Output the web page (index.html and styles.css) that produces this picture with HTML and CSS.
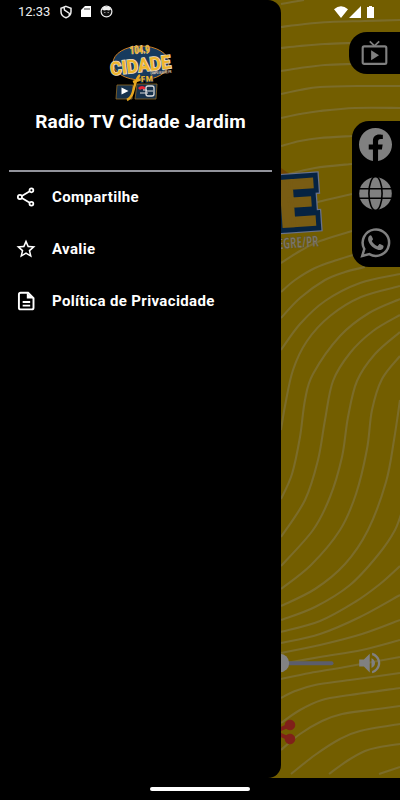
FILE: index.html
```html
<!DOCTYPE html>
<html lang="pt-BR">
<head>
<meta charset="utf-8">
<title>Radio TV Cidade Jardim</title>
<link rel="stylesheet" href="styles.css">
</head>
<body>
<div class="phone">
  <main class="player">
    <svg class="backdrop" viewBox="0 0 400 778" aria-hidden="true">
      <g id="waves"></g>
      <path d="M281 168l13 9-13 3z" fill="#714500"/>
      <g class="big-letter" transform="translate(284 227) rotate(-4)">
        <text class="rim" x="-4" y="0">E</text>
        <text class="navy" x="-4" y="0">E</text>
        <text class="gold" x="-4" y="0">E</text>
      </g>
      <text class="city" transform="translate(266 250) rotate(-4)" textLength="53" lengthAdjust="spacingAndGlyphs">ALEGRE/PR</text>
      <rect x="270" y="661.3" width="63.5" height="4" rx="2" fill="#5b5d6c"/>
      <circle cx="280" cy="663" r="9.2" fill="#828282"/>
      <g fill="#802019" stroke="#802019"><path d="M274 732L290 725M274 732L290 739" stroke-width="4"/><circle cx="290" cy="725" r="4.8"/><circle cx="290" cy="739" r="4.8"/></g>
      <g transform="translate(355.700 649) scale(1.17)"><path fill="#808080" d="M3 9v6h4l5 5V4L7 9H3zm10.5-1.2v8.4A4.7 4.7 0 0 0 16.500 12a4.700 4.700 0 0 0-3-4.200zM14 3.230v2.060c2.890.860 5 3.540 5 6.710s-2.110 5.850-5 6.710v2.060c4.010-.910 7-4.490 7-8.770s-2.990-7.860-7-8.770z"/></g>
    </svg>
    <div class="tv-tab">
      <svg width="27" height="27" viewBox="0 0 24 24"><g fill="none" stroke="#808080" stroke-width="1.900"><rect x="1.500" y="5.700" width="21" height="15.500" rx="1.300"/><path stroke-width="1.500" d="M7.800 1.200L12 5.200l4.200-4"/></g><path fill="#808080" d="M9 9v9l7-4.500z"/></svg>
    </div>
    <nav class="social">
      <svg width="33" height="33" viewBox="0 0 24 24"><path fill="#808080" d="M24 12.070C24 5.410 18.630 0 12 0S0 5.410 0 12.070C0 18.100 4.390 23.100 10.130 24v-8.440H7.080v-3.490h3.050V9.410c0-3.020 1.790-4.690 4.530-4.690 1.310 0 2.680.240 2.680.240v2.970h-1.510c-1.490 0-1.960.930-1.960 1.890v2.250h3.330l-.530 3.490h-2.800V24C19.610 23.100 24 18.100 24 12.070z"/></svg>
      <svg width="33" height="33" viewBox="0 0 33 33"><circle cx="16.500" cy="16.500" r="16.300" fill="#808080"/><g fill="none" stroke="#000" stroke-width="1.600"><ellipse cx="16.500" cy="16.500" rx="6.600" ry="17"/><path d="M0 11.800h33M0 21.200h33"/></g></svg>
      <svg width="33" height="33" viewBox="0 0 33 33"><path d="M3.200 30L5.300 23A13.200 13.200 0 1 1 10.300 28.100Z" fill="none" stroke="#808080" stroke-width="2.500"/><path fill="#808080" d="M10.400 9.800c.8-.8 1.700-.8 2.200.1l1.300 2.900c.3.700-.2 1.200-1.100 2.200 1.300 2.500 3 4.100 5.700 5.200l1.500-1.800c.4-.5.900-.4 1.500-.1l2.600 1.300c.7.400.5 1.500.1 2.400-.8 1.700-2.900 2.300-4.700 1.900-5.300-1.300-8.600-4.500-10.100-8.800-.7-2.100-.2-4.100 1-5.300z"/></svg>
    </nav>
  </main>

  <aside class="drawer">
    <header class="brand">
      <svg class="logo" width="76" height="62" viewBox="-4 0 76 62" role="img" aria-label="Cidade FM 104.9">
        <ellipse cx="34" cy="22" rx="28" ry="17" fill="#173b5e" stroke="#cf7d20" stroke-width="1"/>
        <text class="mini freq" x="23" y="12.500" transform="rotate(-3 33 12)" textLength="20" lengthAdjust="spacingAndGlyphs">104.9</text>
        <text class="mini name" x="4" y="34.500" transform="rotate(-7 4 34)" textLength="61" lengthAdjust="spacingAndGlyphs">CIDADE</text>
        <path d="M10 44h16l-1 14H9zM30 43h20l-1 15H28z" fill="#17324c" stroke="#936b25" stroke-width=".8"/>
        <path d="M14.500 46.500v7l7-3.500z" fill="#fff"/>
        <path d="M20 59c9-4 5-18 13-25M26 41l9-3" fill="none" stroke="#e7a720" stroke-width="2.500"/>
        <text class="mini fm" x="34" y="41" transform="rotate(-4 34 41)" textLength="12">FM</text>
        <text class="town" x="43.500" y="33.500" transform="rotate(-4 43 33)" textLength="21" lengthAdjust="spacingAndGlyphs">CAMPO ALEGRE/PR</text>
        <path d="M32 48q3-3 6 0" fill="none" stroke="#e42535" stroke-width="3"/>
        <rect x="39" y="45" width="8" height="10" rx="2" fill="#17324c" stroke="#ddd" stroke-width="1.300"/>
        <path d="M33 52h8M39 50h7M36 49h4" stroke="#ddd" stroke-width="1.200"/>
      </svg>
      <h1>Radio TV Cidade Jardim</h1>
    </header>
    <ul class="menu">
      <li><svg viewBox="0 0 24 24"><g fill="none" stroke="#fff" stroke-width="2.100"><circle cx="18.500" cy="4" r="2.300"/><circle cx="4.700" cy="12" r="2.500"/><circle cx="18.500" cy="20" r="2.300"/><path d="M7 10.700L16.500 5.200M7 13.300l9.500 5.500"/></g></svg><span>Compartilhe</span></li>
      <li><svg viewBox="1.500 1.500 21 21"><path fill="#fff" d="M22 9.240l-7.190-.620L12 2 9.190 8.630 2 9.240l5.460 4.730L5.820 21 12 17.270 18.180 21l-1.630-7.030L22 9.240zM12 15.400l-3.760 2.270 1-4.280-3.320-2.880 4.380-.380L12 6.100l1.710 4.040 4.380.380-3.320 2.880 1 4.280L12 15.400z"/></svg><span>Avalie</span></li>
      <li><svg viewBox="0 0 24 24"><path d="M5.500 2.100h9L21 8.500V20q0 2-2 2H5.500q-2 0-2-2V4.100q0-2 2-2zM8 13.200h9M8 17.500h9" fill="none" stroke="#fff" stroke-width="2.300"/><path d="M13 2l8 7h-8z" fill="#fff"/></svg><span>Política de Privacidade</span></li>
    </ul>
  </aside>

  <div class="statusbar">
    <span class="clock">12:33</span>
    <svg class="notices" width="54" height="14" viewBox="0 0 54 14"><path d="M6 1.400l5 1.800v3.500c0 3-2 5-5 6-3-1-5-3-5-6V3.200zM4 2l.5 3 5 3.500-.5 2.500" fill="none" stroke="#eee" stroke-width="1.500"/><path d="M25 1h6v11H21V5z" fill="#fff"/><path d="M25 3v2m2-2v2m2-2v2" stroke="#222" stroke-width=".9"/><circle cx="46.500" cy="6.500" r="5.400" fill="#111" stroke="#eee" stroke-width="1.200"/><path d="M42 4.500l2 1q2.500-1 5 0l2-1-1-2.500h-7z" fill="#eee"/><path d="M44 7.500h1.500m2 0h1.500" stroke="#888"/></svg>
    <svg class="signals" width="42" height="14" viewBox="0 0 42 14"><path d="M0 4.300Q7-2 14 4.300L7 13zM27 1v12H15z" fill="#fff"/><path d="M35 1h3v1h2v11h-7V2h2z" fill="#fff"/></svg>
  </div>
  <div class="navbar"><i></i></div>
</div>
<script src="waves.js"></script>
</body>
</html>
```
FILE: styles.css
```css
* { box-sizing: border-box; }
body { margin: 0; background: #000; font-family: Roboto, sans-serif; }
.phone { position: relative; width: 400px; height: 800px; overflow: hidden; background: #000; }
.player { height: 778px; background: #735e00; }
.backdrop { display: block; width: 400px; height: 778px; }
#waves path { fill: none; stroke: #7b6c2a; stroke-width: 2.1; }
.big-letter { font: 900 65px Roboto, sans-serif; stroke-linejoin: miter; }
.rim { fill: #69728a; stroke: #69728a; stroke-width: 14; }
.navy { fill: #052342; stroke: #052342; stroke-width: 11.500; }
.gold { fill: #795c13; stroke: #795c13; stroke-width: 2; }
.city { font: 700 15px "Open Sans", sans-serif; fill: #7e7868; stroke: #4c452e; stroke-width: .3; }
.tv-tab { position: absolute; top: 32px; right: 0; width: 51px; height: 42px; padding-left: 12px; display: flex; align-items: center; background: #000; border-radius: 18px 0 0 18px; }
.social { position: absolute; top: 121px; right: 0; width: 48px; height: 146px; padding: 7px 0 0 7px; display: flex; flex-direction: column; gap: 16px; background: #000; border-radius: 17px 0 0 17px; }
.drawer { position: absolute; top: 0; left: 0; width: 281px; height: 778px; background: #000; border-radius: 0 13px 13px 0; color: #fff; }
.brand { height: 172px; margin: 0 9px; padding-top: 41px; display: flex; flex-direction: column; align-items: center; border-bottom: 2px solid #92939b; }
.logo { display: block; }
h1 { margin: 7px 0 0; font-size: 19px; line-height: 24px; font-weight: 700; letter-spacing: .22px; white-space: nowrap; }
.mini { font-family: Roboto, sans-serif; font-weight: 900; fill: #efb52c; stroke: #193754; stroke-width: 1.800; paint-order: stroke; }
.freq { font-size: 11px; stroke: #d4c8ac; stroke-width: .8; }
.name { font-size: 18.500px; font-weight: 700; stroke: #e5dac1; stroke-width: 1.600; }
.fm { font-size: 8px; }
.town { font: 700 4px Roboto, sans-serif; fill: #f3dfbf; }
.menu { list-style: none; margin: -1px 0 0; padding: 0 16px; }
.menu li { height: 52px; display: flex; align-items: center; gap: 16px; font-size: 15px; font-weight: 700; letter-spacing: .36px; }
.menu svg { width: 20px; height: 20px; }
.statusbar { position: absolute; top: 0; left: 0; right: 0; height: 23px; padding: 0 24px 0 18px; display: flex; align-items: center; color: #eee; }
.clock { width: 42px; font-size: 13px; }
.signals { margin-left: auto; }
.navbar { height: 22px; display: flex; align-items: center; justify-content: center; }
.navbar i { width: 100px; height: 4px; border-radius: 2px; background: #fff; }
```
FILE: waves.js
```js
// Contour lines of the backdrop, each a list of points joined by a smooth curve.
const lines = [
  [281,4, 292,2, 304,0],
  [281,27, 305,24, 330,22, 365,21, 400,20],
  [281,48, 300,46, 325,44, 352,43],
  [281,71, 300,68, 325,65, 352,64],
  [281,94, 300,90, 320,87, 360,86, 400,86],
  [281,118, 300,114, 320,111, 355,108, 400,108],
  [281,146, 300,141, 320,138, 352,136],
  [281,176, 315,168, 352,164],
  [281,212, 322,201, 352,194],
  [281,263, 300,251, 320,241, 352,231],
  [281,292, 295,280, 315,268, 337,260, 360,253],
  [281,318, 300,298, 325,280, 345,272, 365,267],
  [281,350, 300,324, 325,301, 360,283, 400,274],
  [281,430, 285,406, 293,370, 307,341, 330,316, 361,297, 400,286],
  [281,499, 292,474, 300,437, 305,400, 313,374, 340,336, 369,313, 400,299],
  [281,537, 305,500, 318,460, 325,420, 333,381, 350,353, 373,331, 400,315],
  [281,566, 313,530, 330,497, 342,457, 348,417, 357,381, 375,354, 400,332],
  [281,589, 311,565, 340,530, 356,494, 367,449, 372,410, 382,379, 400,356],
  [281,606, 315,589, 345,564, 368,530, 386,482, 394,440, 400,400],
  [281,620, 315,607, 350,585, 378,555, 395,530, 403,508],
  [281,632, 320,621, 355,602, 380,584, 400,566],
  [281,643, 320,634, 360,617, 400,595],
  [281,653, 320,645, 362,634, 400,620],
  [281,664, 320,657, 362,650, 400,640],
  [281,679, 310,673, 345,667, 400,657],
  [281,698, 295,691, 315,685, 350,680, 400,673],
  [281,723, 300,710, 322,700, 350,695, 400,688],
  [281,750, 300,734, 322,721, 342,714, 370,710, 400,706],
  [291,774, 315,755, 340,739, 360,731, 400,724],
  [329,774, 347,761, 365,751, 380,747, 400,744],
  [379,774, 400,767]
];
const group = document.getElementById('waves');
for (const line of lines) {
  const n = line.length / 2;
  const at = i => {
    const k = Math.max(0, Math.min(n - 1, i));
    return [line[2 * k], line[2 * k + 1]];
  };
  let d = 'M' + at(0);
  for (let i = 0; i < n - 1; i++) {
    const [a, b, c, e] = [at(i - 1), at(i), at(i + 1), at(i + 2)];
    const c1 = [b[0] + (c[0] - a[0]) / 6, b[1] + (c[1] - a[1]) / 6];
    const c2 = [c[0] - (e[0] - b[0]) / 6, c[1] - (e[1] - b[1]) / 6];
    d += 'C' + c1 + ' ' + c2 + ' ' + c;
  }
  const path = document.createElementNS('http://www.w3.org/2000/svg', 'path');
  path.setAttribute('d', d);
  group.appendChild(path);
}
```
